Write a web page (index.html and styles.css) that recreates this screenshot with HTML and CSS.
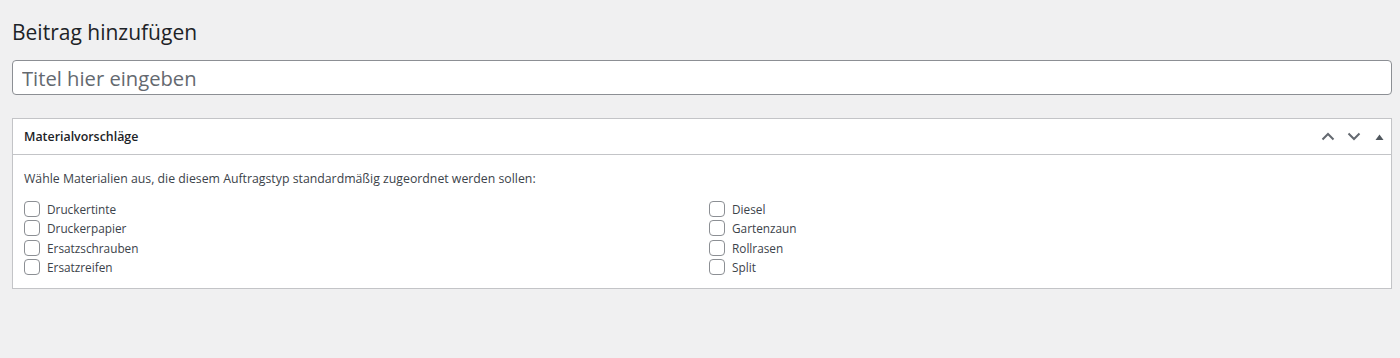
FILE: index.html
```html
<!DOCTYPE html>
<html lang="de">
<head>
<meta charset="utf-8">
<title>Beitrag hinzufügen</title>
<link rel="stylesheet" href="styles.css">
</head>
<body>
<div class="wrap">
  <h1 class="page-title">Beitrag hinzufügen</h1>
  <input class="title-input" type="text" placeholder="Titel hier eingeben">
  <div class="postbox">
    <div class="postbox-header">
      <h2 class="postbox-title">Materialvorschläge</h2>
      <div class="handle-actions">
        <span class="handle-btn">
          <svg width="14" height="9" viewBox="0 0 14 9"><path d="M1.5 7.5 L7 2 L12.5 7.5" fill="none" stroke="#646970" stroke-width="2"/></svg>
        </span>
        <span class="handle-btn">
          <svg width="14" height="9" viewBox="0 0 14 9"><path d="M1.5 1.5 L7 7 L12.5 1.5" fill="none" stroke="#646970" stroke-width="2"/></svg>
        </span>
        <span class="handle-btn small">
          <svg width="9" height="6" viewBox="0 0 9 6"><path d="M0.5 6 L4.5 0.5 L8.5 6 Z" fill="#50575e"/></svg>
        </span>
      </div>
    </div>
    <div class="postbox-inside">
      <p class="desc">Wähle Materialien aus, die diesem Auftragstyp standardmäßig zugeordnet werden sollen:</p>
      <div class="options">
        <ul class="option-col">
          <li><label><span class="cb"></span>Druckertinte</label></li>
          <li><label><span class="cb"></span>Druckerpapier</label></li>
          <li><label><span class="cb"></span>Ersatzschrauben</label></li>
          <li><label><span class="cb"></span>Ersatzreifen</label></li>
        </ul>
        <ul class="option-col">
          <li><label><span class="cb"></span>Diesel</label></li>
          <li><label><span class="cb"></span>Gartenzaun</label></li>
          <li><label><span class="cb"></span>Rollrasen</label></li>
          <li><label><span class="cb"></span>Split</label></li>
        </ul>
      </div>
    </div>
  </div>
</div>
</body>
</html>
```
FILE: styles.css
```css
html, body {
  margin: 0;
  padding: 0;
  background: #f0f0f1;
}
body {
  font-family: "Open Sans", "Noto Sans", sans-serif;
  color: #3c434a;
  font-size: 13px;
}
.wrap {
  padding: 0 8px 0 12px;
}
.page-title {
  margin: 0;
  padding: 17px 0 13px;
  font-size: 21px;
  font-weight: 400;
  line-height: 30px;
  color: #1d2327;
}
.title-input {
  display: block;
  box-sizing: border-box;
  width: 100%;
  height: 35px;
  margin: 0;
  padding: 2px 9px;
  border: 1px solid #8c8f94;
  border-radius: 4px;
  background: #fff;
  font-family: inherit;
  font-size: 20.2px;
  color: #2c3338;
  outline: none;
}
.title-input::placeholder {
  color: #646970;
  opacity: 1;
}
.postbox {
  margin-top: 23px;
  background: #fff;
  border: 1px solid #c3c4c7;
  box-shadow: 0 1px 1px rgba(0,0,0,0.04);
}
.postbox-header {
  display: flex;
  align-items: center;
  justify-content: space-between;
  height: 35px;
  border-bottom: 1px solid #c3c4c7;
}
.postbox-title {
  margin: 0;
  padding: 0 11px;
  font-size: 12.4px;
  font-weight: 600;
  color: #1d2327;
}
.handle-actions {
  display: flex;
  align-items: center;
  padding-right: 0;
}
.handle-btn {
  display: flex;
  align-items: center;
  justify-content: center;
  width: 26px;
  height: 35px;
}
.handle-btn.small {
  width: 24px;
}
.postbox-inside {
  padding: 0 11px 11px;
}
.desc {
  margin: 0;
  padding: 14px 0 11px;
  font-size: 12.3px;
  line-height: 19px;
}
.options {
  display: grid;
  grid-template-columns: 685px 1fr;
}
.option-col {
  list-style: none;
  margin: 0;
  padding: 0;
}
.option-col li {
  height: 19.5px;
  display: flex;
  align-items: center;
}
.option-col label {
  display: flex;
  align-items: center;
  font-size: 11.8px;
  color: #3c434a;
}
.cb {
  display: inline-block;
  box-sizing: border-box;
  width: 16px;
  height: 16px;
  border: 1px solid #8c8f94;
  border-radius: 4px;
  background: #fff;
  margin-right: 7px;
}
```
